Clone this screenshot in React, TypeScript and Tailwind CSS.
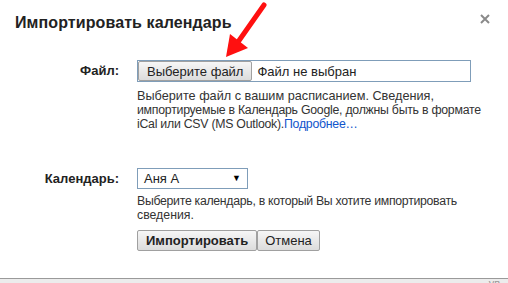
const font = { fontFamily: '"Liberation Sans", Arial, sans-serif' };

const Arrow = () => (
  <svg className="absolute left-0 top-0 pointer-events-none" width="508" height="80" viewBox="0 0 508 80">
    <line x1="264" y1="5" x2="238" y2="42" stroke="#ff1010" strokeWidth="5" strokeLinecap="round" />
    <polygon points="226,57 230,34 248,48" fill="#ff1010" />
  </svg>
);

const CloseIcon = () => (
  <svg width="10" height="10" viewBox="0 0 10 10" className="absolute left-[480px] top-[14px]">
    <path d="M1 1 L9 9 M9 1 L1 9" stroke="#8a8a8a" strokeWidth="2" />
  </svg>
);

export default function App() {
  return (
    <div className="relative h-[283px] w-[508px] overflow-hidden bg-white text-[13px] text-[#222]" style={font}>
      <div className="flex h-[278px] flex-col">
        <h1 className="pl-[15px] pt-[12px] text-[16px] font-bold leading-[21px] tracking-[0.1px] text-[#222]">
          Импортировать календарь
        </h1>

        {/* file row */}
        <div className="mt-[27px] flex">
          <div className="w-[119px] pt-[3px] text-right font-bold leading-[16px]">Файл:</div>
          <div className="ml-[18px] w-[360px]">
            <div className="flex h-[22px] w-[334px] items-stretch border border-[#7f9db9] bg-white">
              <div className="flex items-center rounded-[2px] border border-[#a0a0a0] bg-gradient-to-b from-[#f6f6f6] to-[#dcdcdc] px-[8px] leading-none">
                Выберите файл
              </div>
              <div className="flex items-center pl-[5px] leading-none">Файл не выбран</div>
            </div>
            <p className="mt-[7px] whitespace-nowrap text-[12.3px] leading-[14px] text-[#333]">
              <span className="text-[12.7px]">Выберите файл с вашим расписанием. Сведения,</span>
              <br />
              <span className="tracking-[-0.25px]">импортируемые в Календарь Google, должны быть в формате</span>
              <br />
              <span className="tracking-[-0.25px]">
                iCal или CSV (MS Outlook).<a className="text-[#1155cc]">Подробнее…</a>
              </span>
            </p>
          </div>
        </div>

        {/* calendar row */}
        <div className="mt-[37px] flex">
          <div className="w-[119px] pt-[3px] text-right font-bold leading-[16px]">Календарь:</div>
          <div className="ml-[18px] w-[360px]">
            <div className="flex h-[21px] w-[111px] items-center justify-between border border-[#7f9db9] bg-white pl-[6px] pr-[6px] leading-none">
              <span>Аня А</span>
              <span className="text-[9px] text-black">▼</span>
            </div>
            <p className="mt-[5px] whitespace-nowrap text-[12.3px] leading-[14px] text-[#333]">
              <span className="tracking-[-0.3px]">Выберите календарь, в который Вы хотите импортировать</span>
              <br />
              сведения.
            </p>
            <div className="mt-[8px] flex">
              <button className="h-[21px] rounded-[2px] border border-[#a0a0a0] bg-gradient-to-b from-[#f6f6f6] to-[#dcdcdc] px-[8px] font-bold leading-none text-[#222]">
                Импортировать
              </button>
              <button className="h-[21px] rounded-[2px] border border-[#a0a0a0] bg-gradient-to-b from-[#f6f6f6] to-[#dcdcdc] px-[7px] leading-none text-[#222]">
                Отмена
              </button>
            </div>
          </div>
        </div>
      </div>

      <div className="h-[5px] overflow-hidden border-t border-[#9a9a9a] bg-[#ececec]">
        <div className="pr-[8px] text-right text-[11px] leading-[8px] text-[#999]">ув</div>
      </div>

      <CloseIcon />
      <Arrow />
    </div>
  );
}
